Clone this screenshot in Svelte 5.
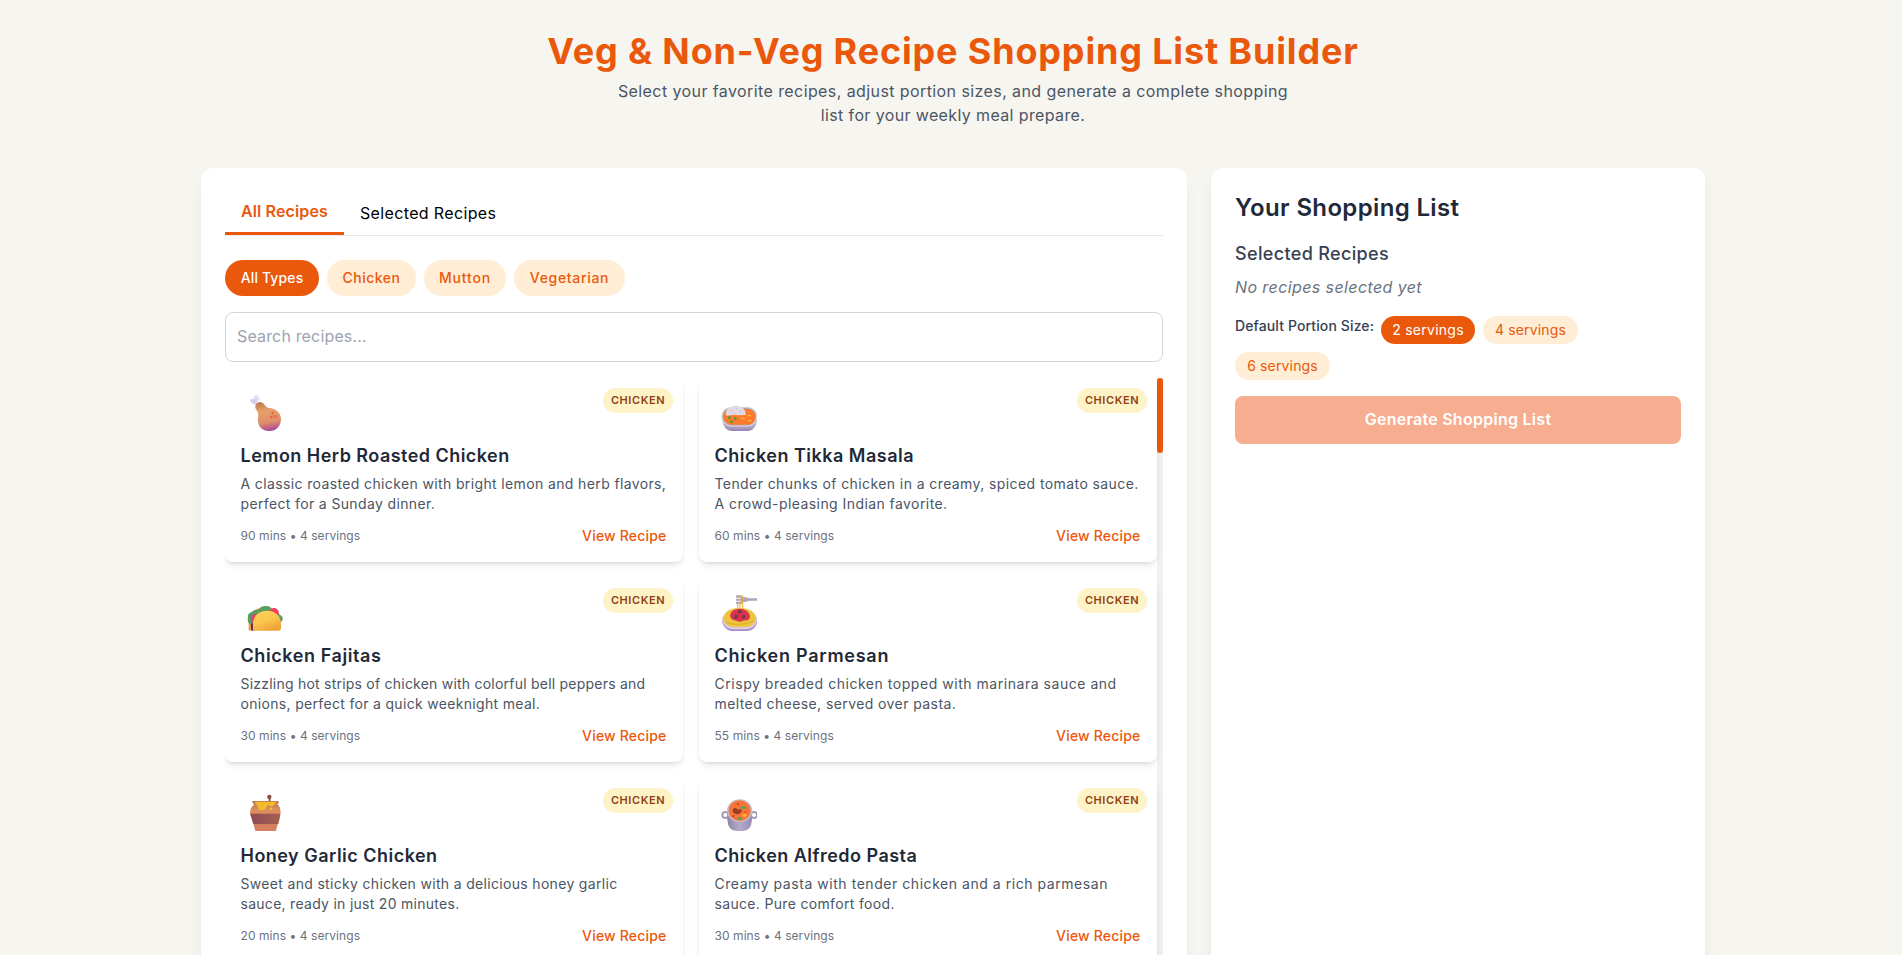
<script>
  const types = [
    { label: 'All Types', width: 94, ls: 0.136 },
    { label: 'Chicken', width: 89, ls: 0.49 },
    { label: 'Mutton', width: 82, ls: 0.8 },
    { label: 'Vegetarian', width: 111, ls: 0.68 }
  ];

  const recipes = [
    { icon: 'drumstick', title: 'Lemon Herb Roasted Chicken', ls: 0.46, mins: 90,
      lines: [['A classic roasted chicken with bright lemon and herb flavors,', 0.37], ['perfect for a Sunday dinner.', 0.36]] },
    { icon: 'curry', title: 'Chicken Tikka Masala', ls: 0.49, mins: 60,
      lines: [['Tender chunks of chicken in a creamy, spiced tomato sauce.', 0.41], ['A crowd-pleasing Indian favorite.', 0.43]] },
    { icon: 'taco', title: 'Chicken Fajitas', ls: 0.58, mins: 30,
      lines: [['Sizzling hot strips of chicken with colorful bell peppers and', 0.225], ['onions, perfect for a quick weeknight meal.', 0.32]] },
    { icon: 'pasta', title: 'Chicken Parmesan', ls: 0.75, mins: 55,
      lines: [['Crispy breaded chicken topped with marinara sauce and', 0.535], ['melted cheese, served over pasta.', 0.41]] },
    { icon: 'honey', title: 'Honey Garlic Chicken', ls: 0.48, mins: 20,
      lines: [['Sweet and sticky chicken with a delicious honey garlic', 0.322], ['sauce, ready in just 20 minutes.', 0.28]] },
    { icon: 'pot', title: 'Chicken Alfredo Pasta', ls: 0.47, mins: 30,
      lines: [['Creamy pasta with tender chicken and a rich parmesan', 0.545], ['sauce. Pure comfort food.', 0.33]] }
  ];

  const portions = [2, 4, 6];
  let activeType = $state('All Types');
  let portion = $state(2);
</script>

<svg class="defs" width="0" height="0" aria-hidden="true">
  <defs>
    <linearGradient id="meat" x1="0.4" y1="0" x2="0.55" y2="1">
      <stop offset="0" stop-color="#c07a50" /><stop offset="0.3" stop-color="#e9a06c" /><stop offset="0.68" stop-color="#dd8f69" /><stop offset="0.85" stop-color="#c86a80" /><stop offset="1" stop-color="#a83fa0" />
    </linearGradient>
    <linearGradient id="bone" x1="0" y1="1" x2="1" y2="0">
      <stop offset="0" stop-color="#cdb6f0" /><stop offset="1" stop-color="#eeebf0" />
    </linearGradient>
    <linearGradient id="bowl" x1="0" y1="0" x2="0" y2="1">
      <stop offset="0" stop-color="#d5d0da" /><stop offset="0.7" stop-color="#b0a5c4" /><stop offset="1" stop-color="#9783b4" />
    </linearGradient>
    <linearGradient id="shell" x1="0" y1="0" x2="0.5" y2="1">
      <stop offset="0" stop-color="#ffd45c" /><stop offset="0.6" stop-color="#f9c64a" /><stop offset="1" stop-color="#f0a33c" />
    </linearGradient>
    <linearGradient id="clay" x1="0" y1="0" x2="0" y2="1">
      <stop offset="0" stop-color="#b9734c" /><stop offset="0.3" stop-color="#dc905e" /><stop offset="0.75" stop-color="#d08259" /><stop offset="1" stop-color="#d67f68" />
    </linearGradient>
    <linearGradient id="band" x1="0" y1="0" x2="1" y2="0">
      <stop offset="0" stop-color="#8a4b55" /><stop offset="1" stop-color="#a5604f" />
    </linearGradient>
    <linearGradient id="potside" x1="0" y1="0" x2="1" y2="0">
      <stop offset="0" stop-color="#9184a8" /><stop offset="0.5" stop-color="#b5abc8" /><stop offset="1" stop-color="#9c8db5" />
    </linearGradient>
  </defs>
</svg>

{#snippet emoji(name)}
  {#if name === 'drumstick'}
    <svg viewBox="18 27 126 120" class="emoji">
      <path d="M62 60 L50 53 Q44 50 46 45 Q49 40 55 43 L57 40 Q55 31 64 30 Q72 30 71 37 Q76 41 72 46 Q68 49 66 52 L70 58Z" fill="url(#bone)" />
      <path d="M64 57 Q71 47 82 53 C89 57 91 66 101 69 C123 70 138 84 138 102 C138 124 123 138 103 138 C82 138 68 124 69 104 C69 92 72 86 66 77 C60 71 59 64 64 57Z" fill="url(#meat)" />
      <g fill="#e8653e"><circle cx="113" cy="84" r="4" /><circle cx="109" cy="96" r="4" /><circle cx="121" cy="94" r="4" /></g>
    </svg>
  {:else if name === 'curry'}
    <svg viewBox="15 27 126 120" class="emoji">
      <path d="M36 92 C36 120 46 138 67 138 H111 C132 138 142 120 142 92Z" fill="url(#bowl)" />
      <rect x="34" y="66" width="108" height="59" rx="29" fill="#d2ccd4" />
      <rect x="38" y="69" width="100" height="52" rx="26" fill="#aca4b3" />
      <path d="M40 93 Q41 73 64 72 H112 Q135 74 136 95 Q135 118 112 119 H64 Q42 117 40 93Z" fill="#fb7a2b" />
      <path d="M48 91 C45 74 59 62 77 62 C95 62 109 73 107 90 Q94 90 85 91 Q67 88 52 92Z" fill="#e2d9e4" />
      <g fill="#b9a9c5"><circle cx="64" cy="77" r="1.5" /><circle cx="79" cy="70" r="1.5" /><circle cx="92" cy="80" r="1.5" /><circle cx="75" cy="84" r="1.5" /></g>
      <g fill="#4a9b37"><circle cx="58" cy="98" r="4" /><circle cx="76" cy="101" r="4" /><circle cx="64" cy="110" r="4" /></g>
      <g fill="#ffbf37"><path d="M110 94 Q118 85 125 94Z" /><path d="M91 102 Q99 93 107 102Z" /><path d="M111 109 Q119 100 126 109Z" /></g>
    </svg>
  {:else if name === 'taco'}
    <svg viewBox="18 27 126 120" class="emoji">
      <path d="M41 137 V105 Q43 76 78 68 L112 73 Q131 85 135 112Z" fill="#ed9b37" />
      <path d="M43 116 Q36 109 39 97 Q37 84 52 80 Q58 72 70 75 Q77 62 93 63 Q107 63 112 74 L137 91 Q147 98 141 108 L136 112 L90 88 L56 116Z" fill="#579d60" />
      <path d="M104 78 Q107 67 120 69 Q132 73 132 88 L126 92Z" fill="#ef3f63" />
      <path d="M50 110 Q46 89 62 86 L73 94 L58 116Z" fill="#e93a70" />
      <path d="M47 116 L58 113 V137 H49Z" fill="#6e2e4c" />
      <path d="M54 137 V116 C55 91 73 77 97 77 C122 77 138 94 138 117 V130 Q138 137 131 137Z" fill="url(#shell)" />
    </svg>
  {:else if name === 'pasta'}
    <svg viewBox="15 27 126 120" class="emoji">
      <path d="M36 106 C38 126 51 138 68 138 H109 C128 138 141 126 142 106Z" fill="#aa8ccb" />
      <path d="M36 104 Q36 93 48 84 Q64 69 89 69 Q114 69 130 84 Q142 93 142 105 Q135 132 106 133 H71 Q42 132 36 104Z" fill="#d9ccdf" />
      <path d="M40 101 Q44 69 89 69 Q134 70 138 101 Q134 125 104 126 H73 Q44 124 40 101Z" fill="#edc43c" />
      <path d="M48 110 Q76 128 129 109" fill="none" stroke="#d9a62c" stroke-width="2.5" />
      <path d="M60 94 Q62 76 78 73 Q95 68 107 76 Q120 84 120 97 Q115 109 102 106 Q91 114 80 107 Q64 107 60 94Z" fill="#d93452" />
      <g fill="#83373c"><circle cx="89" cy="80" r="6" /><circle cx="78" cy="95" r="6.5" /><circle cx="101" cy="95" r="6" /></g>
      <path d="M96 37 H108 L117 40 H142 V47 H117 L108 51 H96 V57 H78 V51 H91 V47 H78 V42 H91 V38 H78 V31 H94Z" fill="#b3a4bd" />
      <path d="M83 31 V72 M90 54 V72 M98 31 V72" stroke="#e8b83a" stroke-width="3.5" fill="none" />
    </svg>
  {:else if name === 'honey'}
    <svg viewBox="18 27 126 120" class="emoji">
      <path d="M103 54 L104 40" stroke="#80463a" stroke-width="5" /><circle cx="103" cy="36" r="6.5" fill="#874b3b" />
      <path d="M53 48 H129 Q134 52 127 58 Q136 65 137 81 Q136 94 131 108 Q126 124 123 138 H61 Q56 116 49 100 Q41 83 49 68 Q53 62 58 58 Q48 52 53 48Z" fill="url(#clay)" />
      <path d="M46 86 H136 Q134 102 130 117 H55 Q51 101 46 86Z" fill="url(#band)" />
      <path d="M58 50 H124 V54 Q118 58 115 62 Q110 68 105 62 Q97 58 95 66 Q89 80 80 74 Q72 77 68 66 Q66 57 58 50Z" fill="#f2ba2d" />
      <circle cx="108" cy="72" r="4" fill="#f5b63b" />
    </svg>
  {:else}
    <svg viewBox="15 27 126 120" class="emoji">
      <circle cx="46" cy="90" r="9" fill="none" stroke="#a79bb5" stroke-width="6" />
      <circle cx="132" cy="90" r="9" fill="none" stroke="#a79bb5" stroke-width="6" />
      <path d="M52 77 H126 V104 Q124 138 98 138 H79 Q54 137 52 104Z" fill="url(#potside)" />
      <ellipse cx="89" cy="77" rx="38" ry="34" fill="#c8c0d0" />
      <ellipse cx="89" cy="77" rx="33" ry="31" fill="#f9743a" />
      <path d="M68 74 Q75 63 81 72 Q86 76 92 72 Q99 75 91 84 Q81 91 73 85 Q67 81 68 74Z" fill="#963f26" />
      <path d="M88 69 Q98 59 111 68 Q105 75 88 69Z" fill="#58a546" />
      <path d="M80 101 Q89 90 98 102 Q89 109 80 101Z" fill="#58a546" />
      <path d="M96 92 Q104 80 112 92 Q104 99 96 92Z" fill="#ffb52e" />
      <g fill="#cf3527"><circle cx="83" cy="57" r="3" /><circle cx="70" cy="93" r="3" /><circle cx="106" cy="81" r="2.5" /></g>
    </svg>
  {/if}
{/snippet}

<div class="page">
  <header>
    <h1>Veg &amp; Non-Veg Recipe Shopping List Builder</h1>
    <p class="intro">Select your favorite recipes, adjust portion sizes, and generate a complete shopping<br /><span>list for your weekly meal prepare.</span></p>
  </header>

  <main>
    <section class="panel">
      <div class="tabs">
        <button class="tab active">All Recipes</button>
        <button class="tab">Selected Recipes</button>
      </div>
      <div class="types">
        {#each types as t}
          <button class="type" class:on={activeType === t.label} style:width="{t.width}px" style:letter-spacing="{t.ls}px" onclick={() => (activeType = t.label)}>{t.label}</button>
        {/each}
      </div>
      <input type="text" placeholder="Search recipes..." />
      <div class="list">
        <div class="grid">
          {#each recipes as r}
            <article>
              <span class="badge">CHICKEN</span>
              {@render emoji(r.icon)}
              <h3 style:letter-spacing="{r.ls}px">{r.title}</h3>
              <div class="desc">
                {#each r.lines as [text, ls]}
                  <div style:letter-spacing="{ls}px">{text}</div>
                {/each}
              </div>
              <div class="meta">
                <span>{r.mins} mins • 4 servings</span>
                <button>View Recipe</button>
              </div>
            </article>
          {/each}
        </div>
        <div class="track"><div class="thumb"></div></div>
      </div>
    </section>

    <aside class="panel">
      <h2>Your Shopping List</h2>
      <h4>Selected Recipes</h4>
      <p class="empty">No recipes selected yet</p>
      <div class="portions">
        <span>Default Portion Size:</span>
        {#each portions as n}
          <button class:on={portion === n} onclick={() => (portion = n)}>{n} servings</button>
        {/each}
      </div>
      <button class="generate">Generate Shopping List</button>
    </aside>
  </main>
</div>

<style>
  :global(body) { margin: 0; overflow: hidden; background: #f6f5f0; }
  .defs { position: absolute; }
  .page { height: 955px; overflow: hidden; box-sizing: border-box; padding: 31px 0 0 4px; background: #f6f5f0; font-family: Inter, sans-serif; color: #000; }
  h1, h2, h3, h4, p { margin: 0; }
  button { font-family: inherit; border: 0; padding: 0; background: none; cursor: pointer; white-space: nowrap; }

  header { height: 137px; text-align: center; }
  h1 { font-size: 36px; line-height: 40px; font-weight: 700; letter-spacing: 0.838px; color: #ea580c; }
  .intro { margin-top: 8px; font-size: 16px; line-height: 24px; letter-spacing: 0.409px; color: #4b5563; }
  .intro span { letter-spacing: 0.369px; }

  main { display: grid; grid-template-columns: 986px 494px; gap: 24px; width: 1504px; margin: 0 auto; }
  .panel { box-sizing: border-box; height: 850px; min-width: 0; padding: 24px; background: #fff; border-radius: 12px; box-shadow: 0 10px 15px -3px rgba(0, 0, 0, 0.08), 0 4px 6px -4px rgba(0, 0, 0, 0.08); }

  .tabs { display: flex; height: 43px; border-bottom: 1px solid #e5e7eb; }
  .tab { height: 43px; padding: 0 16px; font-size: 16px; line-height: 43px; letter-spacing: 0.355px; }
  .tab.active { box-sizing: border-box; width: 119px; padding: 0 0 2px; line-height: 36px; border-bottom: 3px solid #ea580c; color: #ea580c; font-weight: 600; letter-spacing: 0.13px; }

  .types { display: flex; gap: 8px; margin-top: 24px; }
  .type { height: 36px; border-radius: 18px; background: #ffedd5; color: #ea580c; font-size: 14px; font-weight: 500; line-height: 36px; }
  .type.on { background: #ea580c; color: #fff; }

  input { display: block; box-sizing: border-box; width: 100%; height: 50px; margin-top: 16px; padding: 0 11px 2px; border: 1px solid #d1d5db; border-radius: 8px; background: #fff; font-family: inherit; font-size: 16px; letter-spacing: 0.157px; outline: none; }
  input::placeholder { color: #9ca3af; opacity: 1; }

  .list { display: flex; height: 600px; margin-top: 16px; overflow: hidden; }
  .grid { flex: 1; display: grid; grid-template-columns: 1fr 1fr; grid-auto-rows: 184px; gap: 16px; }
  .track { width: 6px; background: #f1f1f1; }
  .thumb { height: 75px; border-radius: 3px; background: #ea580c; }

  article { position: relative; box-sizing: border-box; padding: 16px 16.5px 0 15.5px; background: #fff; border-radius: 8px; box-shadow: 0 4px 6px -1px rgba(0, 0, 0, 0.1), 0 2px 4px -2px rgba(0, 0, 0, 0.1); }
  .badge { position: absolute; top: 10px; right: 10px; width: 70px; height: 25px; border-radius: 13px; background: #fef3c7; color: #92400e; font-size: 11px; font-weight: 600; line-height: 25px; text-align: center; letter-spacing: 0.575px; }
  .emoji { display: block; width: 42px; height: 40px; margin-left: 0.5px; }
  h3 { margin-top: 8px; font-size: 18px; line-height: 27px; font-weight: 600; color: #1f2937; white-space: nowrap; }
  .desc { margin-top: 5px; font-size: 14px; line-height: 20px; color: #4b5563; white-space: nowrap; }
  .meta { display: flex; justify-content: space-between; align-items: center; height: 21px; margin-top: 11px; font-size: 12px; letter-spacing: 0.069px; color: #6b7280; }
  .meta button { color: #ea580c; font-size: 14px; font-weight: 500; line-height: 21px; letter-spacing: 0.185px; }

  h2 { font-size: 24px; line-height: 32px; font-weight: 600; letter-spacing: 0.35px; color: #1f2937; }
  h4 { margin-top: 16px; font-size: 18px; line-height: 27px; font-weight: 500; letter-spacing: 0.349px; color: #374151; }
  .empty { margin-top: 8px; font-size: 16px; line-height: 24px; font-style: italic; letter-spacing: 0.402px; color: #6b7280; }
  .portions { display: flex; flex-wrap: wrap; gap: 8px; margin-top: 17px; padding-right: 16px; }
  .portions span { width: 138px; font-size: 14px; line-height: 20px; font-weight: 500; letter-spacing: 0.12px; color: #374151; white-space: nowrap; }
  .portions button { width: 95px; height: 28px; border-radius: 14px; background: #ffedd5; color: #ea580c; font-size: 14px; line-height: 28px; letter-spacing: 0.151px; }
  .portions button.on { width: 94px; background: #ea580c; color: #fff; letter-spacing: 0.263px; }
  .generate { width: 100%; height: 48px; margin-top: 16px; padding-bottom: 2px; border-radius: 8px; background: #f7ad90; color: #fff; font-size: 16px; font-weight: 600; line-height: 46px; letter-spacing: 0.27px; }
</style>
